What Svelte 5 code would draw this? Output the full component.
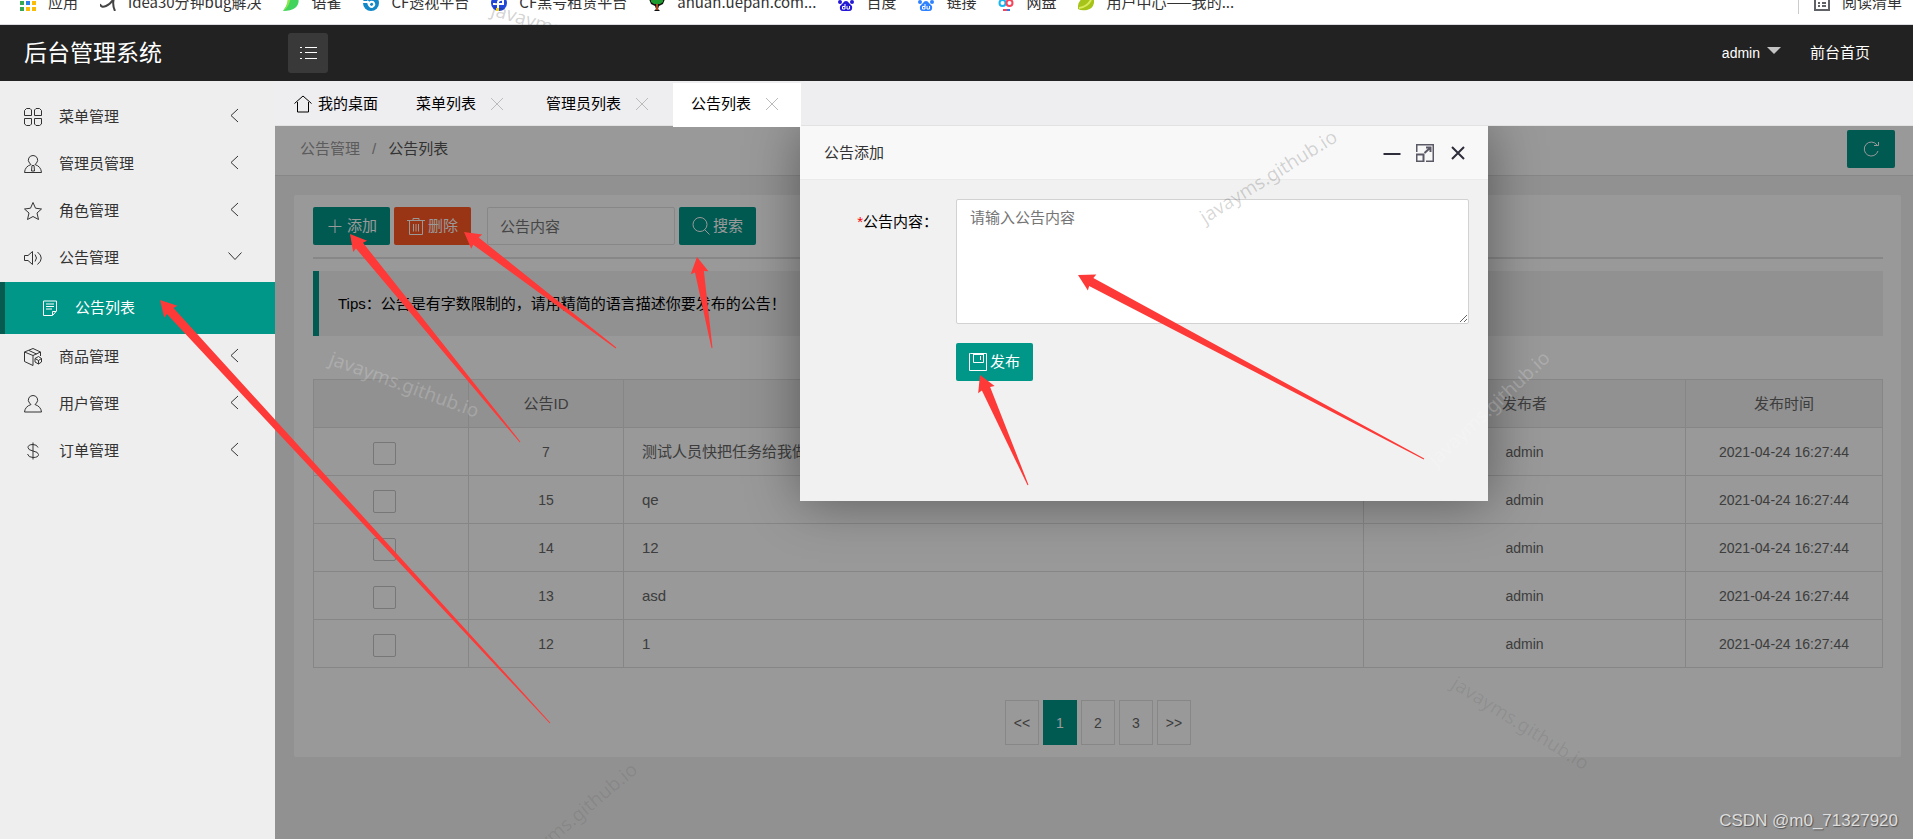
<script lang="ts">
    type Arrow = { tip: [number, number]; tail: [number, number] };

    // 18x18 line icons
    const icons: Record<string, string> = {
        plus: "M9 2.5V16M2.5 9.5H15.5",
        trash: "M0 3.5H18M6 3V1.5H12V3M2.5 4V17.5H15.5V4M6.5 7V14.5M9 7V14.5M11.5 7V14.5",
        search: "M8 .5A7 7 0 1 0 8 14.5A7 7 0 1 0 8 .5ZM12.5 12.5L17.5 17.5",
        save: "M1.5 .5H17.5V17.5H.5V.5ZM4.5 1V9.5H14.5V1M11.5 3V7M4 1.5H14",
        refresh: "M15 5A7 7 0 1 0 16 11M16.5 2V5.5H12",
        list: "M6 3.5H18M6 8.5H18M6 14.5H18M1 3.5H3M1 8.5H3M1 14.5H3",
        home: "M.5 8.5L9 1L17.5 8.5M3.5 7V17H14.5V7",
        menu: "M2.5 .5H6L7.5 2V7.5H.5V2.5ZM12 .5H15.5L17.5 2.5V7.5H10.5V2ZM.5 10.5H7.5V16L6 17.5H2.5L.5 16ZM10.5 10.5H17.5V16L15.5 17.5H12L10.5 16Z",
        manager: "M9 .5A4.5 4.5 0 0 0 5.5 8L7 9.5C3 11 1 13 .5 17.5H17.5C17 13 15 11 11 9.5L12.5 8A4.5 4.5 0 0 0 9 .5ZM8 10.5H10L10.5 16H7.5Z",
        star: "M9 .5L11.5 6.2L17.5 7L13 11L14.5 17.5L9 14.5L3.5 17.5L5 11L.5 7L6.5 6.2Z",
        sound: "M.5 6.5H4L8.5 2.5V15.5L4 11.5H.5ZM11 5.5Q14 9 11 12.5M13.5 3Q21 9 13.5 15.5",
        goods: "M9 .5L16.5 4L9 7.5L.5 4ZM.5 4V13.5L9 17.5V7.5M16.5 4V8M5 2.5L12.5 6M11 10.5L14.5 8.5L17.5 10.5V14L14.5 16L11 14ZM11 10.5L14.5 12.5L17.5 10.5M14.5 12.5V16",
        user: "M9 .5A4.5 4.5 0 0 0 5.5 8L7 9.5C3 11 1 13 .5 17H17.5C17 13 15 11 11 9.5L12.5 8A4.5 4.5 0 0 0 9 .5Z",
        dollar: "M9 .5V17.5M14 5.5Q13 2.5 9 2.5Q4 2.5 4 5.5Q4 8 9 9Q14.5 10 14.5 12.5Q14.5 15.5 9 15.5Q4.5 15.5 3.5 12",
        note: "M2.5 2H15.5V12L11.5 16.5H2.5ZM5 5H13M5 7.5H13M5 10H11M11.5 16V12.5H15",
        left: "M12 1L5 7.5L12 14",
        down: "M2.5 3.500L9 10.500L15.5 3.500",
        close: "M3 3L15 15M15 3L3 15",
        minus: "M.5 10H17.5",
        expand: "M.5 8V.5H17.5V17.5H10M.5 10.5H7.5V17.5H.5ZM8.5 9L14.5 3.5M10 3.5H14.5V8",
    };

    const bookmarks = [
        { icon: "apps", text: "应用" },
        { icon: "idea", text: "idea30分钟bug解决" },
        { icon: "yuque", text: "语雀" },
        { icon: "swirl", text: "CF透视平台" },
        { icon: "rent", text: "CF黑号租赁平台" },
        { icon: "tree", text: "ahuan.uepan.com..." },
        { icon: "paw", text: "百度" },
        { icon: "pawLight", text: "链接" },
        { icon: "pan", text: "网盘" },
        { icon: "leaf", text: "用户中心——我的..." },
    ];

    const menus = [
        { icon: "menu", text: "菜单管理" },
        { icon: "manager", text: "管理员管理" },
        { icon: "star", text: "角色管理" },
        { icon: "sound", text: "公告管理", children: ["公告列表"] },
        { icon: "goods", text: "商品管理" },
        { icon: "user", text: "用户管理" },
        { icon: "dollar", text: "订单管理" },
    ];

    const tabs = ["菜单列表", "管理员列表", "公告列表"];

    const notices = [
        { id: 7, content: "测试人员快把任务给我做" },
        { id: 15, content: "qe" },
        { id: 14, content: "12" },
        { id: 13, content: "asd" },
        { id: 12, content: "1" },
    ].map((n) => ({ ...n, author: "admin", time: "2021-04-24 16:27:44" }));

    const pages = ["<<", "1", "2", "3", ">>"];

    const arrows: Arrow[] = [
        { tip: [160, 300], tail: [550, 723] },
        { tip: [350, 234], tail: [520, 442] },
        { tip: [464, 232], tail: [616, 348] },
        { tip: [697, 257], tail: [712, 348] },
        { tip: [1078, 275], tail: [1424, 459] },
        { tip: [980, 375], tail: [1028, 485] },
    ];

    const marks = [
        { x: 490, y: 15, angle: 17, color: "rgba(34,34,34,.2)" },
        { x: 328, y: 364, angle: 20, color: "rgba(255,255,255,.2)" },
        { x: 1205, y: 224, angle: -32, color: "rgba(0,0,0,.16)" },
        { x: 1436, y: 467, angle: -43, color: "rgba(255,255,255,.2)" },
        { x: 1450, y: 687, angle: 32, color: "rgba(0,0,0,.08)" },
        { x: 518, y: 873, angle: -40, color: "rgba(0,0,0,.08)" },
    ];

    let openMenu = $state("公告管理");
    let activeTab = $state("公告列表");
    let showModal = $state(true);
    let keyword = $state("");
    let notice = $state("");

    function toggle(name: string) {
        openMenu = openMenu === name ? "" : name;
    }

    function points({ tip, tail }: Arrow) {
        const len = Math.hypot(tail[0] - tip[0], tail[1] - tip[1]);
        const dx = (tail[0] - tip[0]) / len;
        const dy = (tail[1] - tip[1]) / len;
        const shape = [[0, 0], [16, 9], [15, 4.5], [len, 0.5], [len, -0.5], [15, -4.5], [16, -9]];
        return shape
            .map(([a, b]) => `${tip[0] + dx * a - dy * b},${tip[1] + dy * a + dx * b}`)
            .join(" ");
    }
</script>

{#snippet icon(name: string)}
    <svg class="icon" viewBox="0 0 18 18" width="18" height="18" aria-hidden="true">
        <path d={icons[name]} />
    </svg>
{/snippet}

{#snippet favicon(name: string)}
    <svg class="favicon" viewBox="0 0 16 16" width="16" height="16" aria-hidden="true">
        {#if name === "apps"}
            <path fill="#ea4335" d="M0 0h4v4H0zM6 0h4v4H6zM12 0h4v4h-4z" />
            <path fill="#34a853" d="M0 6h4v4H0z" />
            <path fill="#2b7de9" d="M6 6h4v4H6z" />
            <path fill="#fbbc05" d="M12 6h4v4h-4zM6 12h4v4H6zM12 12h4v4h-4z" />
            <path fill="#34a853" d="M0 12h4v4H0z" />
        {:else if name === "idea"}
            <path fill="none" stroke="#444" stroke-width="2" d="M0 9Q1 13 6 11Q11 9 14 3Q12 10 15 16" />
        {:else if name === "yuque"}
            <path fill="#42d35c" d="M0 16Q6 8 6 0H14Q18 8 12 13Q8 16 0 16Z" />
            <path fill="#8be84a" d="M0 16Q7 12 8 0L4 2Q6 9 0 16Z" />
        {:else if name === "swirl"}
            <circle cx="8" cy="8" r="8" fill="#1388c7" />
            <path fill="none" stroke="#fff" stroke-width="2" d="M0 7H5Q6 12 9 12Q13 10 10 7Q7 6 6 9M12 4Q8 2 4 5" />
        {:else if name === "rent"}
            <circle cx="8" cy="8" r="8" fill="#2148d8" />
            <path fill="none" stroke="#fff" stroke-width="2" d="M7 16V7Q8 4 12 5V9H7M2 9H6" />
            <path fill="#f5d21a" d="M5 13h3v3H5z" />
        {:else if name === "tree"}
            <path fill="#111" d="M0 4H16L14 9L10 11L9 14L11 16H5L7 14L6 11L2 9Z" />
            <path fill="#1d9b2f" d="M2 2H14V7L11 9H5L2 7Z" />
            <path fill="#a4481b" d="M7 9h2v6H7z" />
        {:else if name === "paw" || name === "pawLight"}
            <g fill={name === "paw" ? "#2419d6" : "#2f82ff"}>
                <circle cx="2" cy="7" r="2" />
                <circle cx="14" cy="7" r="2" />
                <circle cx="5" cy="3" r="2" />
                <circle cx="11" cy="3" r="2" />
                <path d="M8 6Q10 6 11 8L14 11Q15 16 11 16H5Q1 16 2 11L5 8Q6 6 8 6Z" />
            </g>
            <path fill="none" stroke="#fff" d="M7 9V14H4.5V11.5H7M9 11V14H11.5V11" />
        {:else if name === "pan"}
            <circle cx="4.5" cy="8" r="3" fill="none" stroke="#19b5f1" stroke-width="2" />
            <circle cx="11.5" cy="8" r="3" fill="none" stroke="#f5455c" stroke-width="2" />
            <path fill="#f5455c" d="M5 14h4v2H5z" />
            <path fill="#2b7de9" d="M9 14h3v2H9z" />
        {:else}
            <path fill="#a6c31a" d="M0 14Q-1 4 10 1L16 0Q18 13 9 15Q3 16 0 14Z" />
            <path fill="none" stroke="#d9ea5a" stroke-width="2" d="M1 13Q9 12 13 5" />
        {/if}
    </svg>
{/snippet}

<div class="page">
    <div class="bookmarks">
        <div class="bookmark-row">
            {#each bookmarks as item}
                <a class="bookmark" href="#top">{@render favicon(item.icon)}{item.text}</a>
            {/each}
            <a class="bookmark reading" href="#top">
                <svg class="favicon" viewBox="0 0 16 16" width="16" height="16" aria-hidden="true">
                    <path fill="none" stroke="#5f6368" stroke-width="2" d="M1 1H15V15H1ZM4 8H6M8 8H12M4 11H6M8 11H12" />
                </svg>
                阅读清单
            </a>
        </div>
    </div>

    <header class="header">
        <h1>后台管理系统</h1>
        <button class="fold" aria-label="折叠">{@render icon("list")}</button>
        <div class="user">
            <button class="account">admin<i class="caret"></i></button>
            <a href="#home">前台首页</a>
        </div>
    </header>

    <div class="body">
        <nav class="side">
            {#each menus as item}
                <button class="side-item" onclick={() => toggle(item.text)}>
                    {@render icon(item.icon)}
                    <span>{item.text}</span>
                    {@render icon(openMenu === item.text ? "down" : "left")}
                </button>
                {#if item.children && openMenu === item.text}
                    {#each item.children as child}
                        <a class="side-child" href="#notice">{@render icon("note")}<span>{child}</span></a>
                    {/each}
                {/if}
            {/each}
        </nav>

        <div class="main">
            <div class="tabs">
                <button class="tab home">{@render icon("home")}我的桌面</button>
                {#each tabs as tab}
                    <button class="tab" class:active={activeTab === tab} onclick={() => (activeTab = tab)}>
                        {tab}{@render icon("close")}
                    </button>
                {/each}
            </div>

            <main class="content">
                <div class="crumbs">
                    <a href="#notice">公告管理</a>
                    <span>/</span>
                    <a class="current" href="#notice">公告列表</a>
                    <button class="btn refresh" aria-label="刷新">{@render icon("refresh")}</button>
                </div>

                <section class="card">
                    <div class="toolbar">
                        <button class="btn" onclick={() => (showModal = true)}>{@render icon("plus")}添加</button>
                        <button class="btn danger">{@render icon("trash")}删除</button>
                        <input class="keyword" type="text" placeholder="公告内容" aria-label="公告内容" bind:value={keyword} />
                        <button class="btn">{@render icon("search")}搜索</button>
                    </div>
                    <hr />
                    <blockquote>Tips：公告是有字数限制的，请用精简的语言描述你要发布的公告！</blockquote>

                    <table>
                        <colgroup>
                            <col class="col-id" />
                            <col class="col-id" />
                            <col />
                            <col class="col-author" />
                            <col class="col-time" />
                        </colgroup>
                        <thead>
                            <tr>
                                <th></th>
                                <th>公告ID</th>
                                <th></th>
                                <th>发布者</th>
                                <th>发布时间</th>
                            </tr>
                        </thead>
                        <tbody>
                            {#each notices as row}
                                <tr>
                                    <td class="check"><input type="checkbox" aria-label={String(row.id)} /></td>
                                    <td>{row.id}</td>
                                    <td class="text">{row.content}</td>
                                    <td>{row.author}</td>
                                    <td>{row.time}</td>
                                </tr>
                            {/each}
                        </tbody>
                    </table>

                    <div class="pager">
                        {#each pages as page}
                            <button class:current={page === "1"}>{page}</button>
                        {/each}
                    </div>
                </section>

                {#if showModal}
                    <div class="shade"></div>
                    <div class="modal" role="dialog" aria-label="公告添加">
                        <div class="modal-head">
                            <h2>公告添加</h2>
                            <button aria-label="最小化">{@render icon("minus")}</button>
                            <button aria-label="最大化">{@render icon("expand")}</button>
                            <button aria-label="关闭" onclick={() => (showModal = false)}>{@render icon("close")}</button>
                        </div>
                        <form class="modal-body" onsubmit={(e) => e.preventDefault()}>
                            <label for="notice"><b>*</b>公告内容：</label>
                            <textarea id="notice" placeholder="请输入公告内容" bind:value={notice}></textarea>
                            <button class="btn publish">{@render icon("save")}发布</button>
                        </form>
                    </div>
                {/if}
            </main>
        </div>
    </div>

    <svg class="marks" aria-hidden="true">
        {#each marks as mark}
            <text x={mark.x} y={mark.y} fill={mark.color} transform="rotate({mark.angle} {mark.x} {mark.y})">javayms.github.io</text>
        {/each}
        {#each arrows as arrow}
            <polygon points={points(arrow)} />
        {/each}
    </svg>
    <span class="credit">CSDN @m0_71327920</span>
</div>

<style>
    :global(body) {
        margin: 0;
    }

    .page {
        position: relative;
        display: flex;
        flex-direction: column;
        min-height: 100vh;
        overflow: hidden;
        font-family: "Liberation Sans", "Noto Sans CJK SC", sans-serif;
        font-size: 15px;
        line-height: 24px;
        color: #333;
    }

    .page * {
        box-sizing: border-box;
    }

    a {
        color: inherit;
        text-decoration: none;
    }

    button,
    input,
    textarea {
        margin: 0;
        padding: 0;
        border: 0;
        background: none;
        font: inherit;
        color: inherit;
    }

    .icon {
        flex: none;
        fill: none;
        stroke: currentColor;
    }

    /* bookmarks */
    .bookmarks {
        height: 25px;
        overflow: hidden;
        border-bottom: 1px solid #dadce0;
        background: #fff;
        font-family: "Noto Sans CJK SC", sans-serif;
    }

    .bookmark-row {
        display: flex;
        gap: 22px;
        margin-top: -10px;
        padding: 0 11px 0 20px;
    }

    .bookmark {
        display: flex;
        align-items: center;
        gap: 12px;
        white-space: nowrap;
    }

    .favicon {
        flex: none;
        margin-top: 2px;
    }

    .reading {
        margin-left: auto;
        padding-left: 15px;
        border-left: 1px solid #ccc;
    }

    /* header */
    .header {
        display: flex;
        align-items: center;
        height: 56px;
        background: #222;
        color: #fff;
    }

    h1 {
        width: 264px;
        margin: 0 0 0 24px;
        font-size: 23px;
        font-weight: 400;
        line-height: 32px;
    }

    .fold {
        display: flex;
        align-items: center;
        justify-content: center;
        width: 40px;
        height: 40px;
        border-radius: 3px;
        background: #393939;
    }

    .user {
        display: flex;
        gap: 29px;
        margin-left: auto;
        padding-right: 43px;
    }

    .account {
        display: flex;
        gap: 7px;
        font-size: 14px;
    }

    .caret {
        margin-top: 6px;
        border: 7px solid transparent;
        border-top-color: #c4c4c4;
        border-bottom: 0;
    }

    /* layout */
    .body {
        display: flex;
        flex: 1;
    }

    .side {
        display: flex;
        flex-direction: column;
        flex: none;
        width: 275px;
        padding-top: 13px;
        background: #eee;
    }

    .side-item {
        display: flex;
        align-items: center;
        gap: 17px;
        height: 47px;
        padding: 0 31px 2px 24px;
        text-align: left;
    }

    .side-item span {
        flex: 1;
    }

    .side-child {
        display: flex;
        align-items: center;
        gap: 16px;
        height: 52px;
        padding-left: 36px;
        border-left: 5px solid #075a50;
        background: #009688;
        color: #fff;
    }

    .main {
        display: flex;
        flex-direction: column;
        flex: 1;
        min-width: 0;
    }

    .tabs {
        position: relative;
        z-index: 3;
        display: flex;
        gap: 2px;
        height: 45px;
        padding-top: 2px;
        border-bottom: 1px solid #e2e2e2;
        background: #eeeef0;
        color: #000;
    }

    .tab {
        display: flex;
        align-items: center;
        gap: 12px;
        height: 43px;
        padding: 0 20px 2px 18px;
    }

    .tab.home {
        gap: 6px;
        padding: 0 18px 2px 19px;
    }

    .tab:not(.home) .icon {
        color: #bbb;
    }

    .tab.active {
        height: 44px;
        background: #fff;
    }

    .content {
        position: relative;
        flex: 1;
        overflow: hidden;
        background: #f2f2f2;
        color: #666;
    }

    .crumbs {
        display: flex;
        align-items: center;
        gap: 12px;
        height: 50px;
        padding: 0 18px 3px 25px;
        border-bottom: 1px solid #e2e2e2;
        background: #fff;
        color: #999;
    }

    .crumbs .current {
        color: #555;
    }

    .btn {
        display: flex;
        align-items: center;
        gap: 3px;
        height: 38px;
        padding: 0 13px;
        border-radius: 2px;
        background: #009688;
        color: #fff;
        white-space: nowrap;
    }

    .btn.danger {
        background: #ff5722;
    }

    .refresh {
        margin-left: auto;
        padding: 0 15px;
    }

    .card {
        margin: 19px 12px 19px 19px;
        padding: 12px 18px 12px 19px;
        border-radius: 2px;
        background: #fff;
    }

    .toolbar {
        display: flex;
        gap: 4px;
    }

    .keyword {
        width: 188px;
        height: 38px;
        margin-left: 12px;
        padding: 0 12px;
        border: 1px solid #e2e2e2;
        border-radius: 2px;
    }

    input::placeholder,
    textarea::placeholder {
        color: #757575;
        opacity: 1;
    }

    hr {
        height: 2px;
        margin: 12px 0;
        border: 0;
        background: #e2e2e2;
    }

    blockquote {
        margin: 0 0 43px;
        padding: 21px 19px 20px;
        border-left: 6px solid #009688;
        background: #f2f2f2;
        color: #000;
    }

    table {
        width: 100%;
        table-layout: fixed;
        border-collapse: collapse;
    }

    .col-id {
        width: 155px;
    }

    .col-author {
        width: 322px;
    }

    .col-time {
        width: 197px;
    }

    th,
    td {
        height: 48px;
        padding: 0 18px;
        border: 1px solid #e0e0e0;
        text-align: center;
        font-weight: 400;
    }

    th {
        background: #f2f2f2;
    }

    td {
        font-size: 14px;
    }

    td.text {
        font-size: 15px;
        text-align: left;
    }

    td.check {
        padding-top: 2px;
        padding-right: 32px;
    }

    td.check input {
        display: inline-block;
        width: 23px;
        height: 23px;
        border: 1px solid #c6c6c6;
        border-radius: 2px;
        appearance: none;
        vertical-align: middle;
    }

    .pager {
        display: flex;
        justify-content: center;
        gap: 4px;
        margin-top: 32px;
    }

    .pager button {
        width: 34px;
        height: 45px;
        border: 1px solid #e2e2e2;
        font-size: 14px;
    }

    .pager .current {
        border-color: #009688;
        background: #009688;
        color: #fff;
    }

    /* dialog */
    .shade {
        position: absolute;
        inset: 0;
        background: rgba(0, 0, 0, 0.4);
    }

    .modal {
        position: absolute;
        top: 0;
        left: 525px;
        width: 688px;
        height: 375px;
        background: #f1f1f1;
        box-shadow: 1px 1px 50px rgba(0, 0, 0, 0.4);
    }

    .modal-head {
        display: flex;
        align-items: center;
        gap: 15px;
        height: 54px;
        padding: 0 21px 0 24px;
        border-bottom: 1px solid #eaeaea;
        background: #f8f8f8;
        color: #333;
    }

    .modal-head h2 {
        flex: 1;
        margin: 0;
        font-size: 15px;
        font-weight: 400;
    }

    .modal-head button {
        display: flex;
        color: #2e2d3c;
    }

    .modal-head .icon {
        stroke-width: 2;
    }

    .modal-head button:nth-of-type(2) .icon {
        stroke: #5a5966;
    }

    .modal-body {
        display: grid;
        grid-template-columns: 138px 1fr;
        gap: 19px 18px;
        padding: 19px 19px 0 0;
        color: #000;
    }

    .modal-body label {
        padding-top: 11px;
        text-align: right;
    }

    .modal-body b {
        color: #f00;
        font-weight: 400;
    }

    textarea {
        height: 125px;
        padding: 6px 13px;
        border: 1px solid #d2d2d2;
        border-radius: 2px;
        background: #fff;
        resize: vertical;
    }

    .publish {
        grid-column: 2;
        justify-self: start;
    }

    /* annotations */
    .marks {
        position: absolute;
        top: 0;
        left: 0;
        z-index: 5;
        width: 100%;
        height: 100%;
        pointer-events: none;
    }

    .marks text {
        font-family: "Noto Sans", sans-serif;
        font-size: 19px;
    }

    .marks polygon {
        fill: #fd3a38;
    }

    .credit {
        position: absolute;
        right: 15px;
        bottom: 6px;
        z-index: 5;
        font-size: 17px;
        color: #ddd;
        text-shadow: 1px 1px 1px #555;
    }
</style>
